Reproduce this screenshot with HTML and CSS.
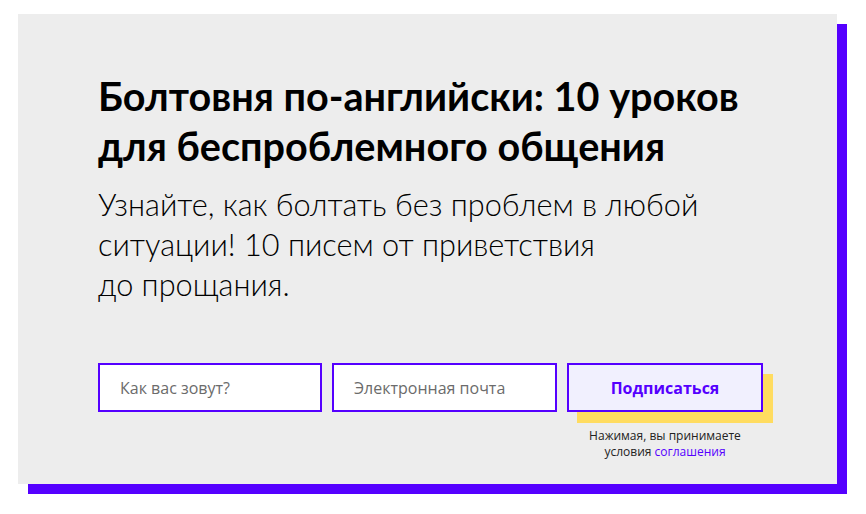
FILE: index.html
```html
<!DOCTYPE html>
<html lang="ru">

<head>
    <meta charset="UTF-8" />
    <meta name="viewport" content="width=device-width, initial-scale=1.0" />
    <title>Болтовня по-английски</title>
    <link rel="stylesheet" href="styles.css">
</head>

<body>

    <div class="promo">
        <h1>Болтовня по-английски: 10 уроков<br>для беспроблемного общения</h1>
        <p class="lead">Узнайте, как болтать без проблем в любой<br>ситуации! 10 писем от приветствия<br>до прощания.</p>

        <!-- Subscribe form -->
        <form class="subscribe" onsubmit="return false;">
            <input type="text" class="field" placeholder="Как вас зовут?" />
            <input type="email" class="field field-wide" placeholder="Электронная почта" />
            <div class="submit-col">
                <button type="submit" class="submit-btn">Подписаться</button>
                <div class="terms">
                    <div>Нажимая, вы принимаете</div>
                    <div>условия <a href="#">соглашения</a></div>
                </div>
            </div>
        </form>
    </div>

</body>

</html>
```

FILE: styles.css
```css
html {
    min-height: 100%;
}

body {
    margin: 0;
    min-height: 514px;
    box-sizing: border-box;
    padding: 14px 0 30px 18px;
    background: #fff;
    font-family: 'Lato', sans-serif;
    color: #000;
}

.promo {
    width: 819px;
    height: 470px;
    box-sizing: border-box;
    padding: 57px 0 0 80px;
    background: #ededed;
    box-shadow: 10px 10px 0 #5500ff;
}

h1 {
    margin: 0;
    font-size: 39.6px;
    line-height: 50px;
    font-weight: 700;
}

.lead {
    margin: 14px 0 0;
    font-size: 30.7px;
    line-height: 40px;
    font-weight: 300;
}

.subscribe {
    display: flex;
    gap: 10px;
    margin-top: 58px;
}

.field {
    width: 224px;
    height: 49px;
    box-sizing: border-box;
    padding: 0 20px;
    border: 2px solid #5500ff;
    background: #fff;
    font-family: 'Open Sans', sans-serif;
    font-size: 16px;
    color: #333;
    outline: none;
}

.field-wide {
    width: 225px;
}

.field::placeholder {
    color: #6b6b6b;
}

.submit-col {
    display: flex;
    flex-direction: column;
    align-items: center;
    width: 196px;
}

.submit-btn {
    width: 196px;
    height: 49px;
    border: 2px solid #5500ff;
    background: #f1f0fe;
    box-shadow: 10px 11px 0 #ffdc60;
    font-family: 'Open Sans', sans-serif;
    font-size: 16px;
    font-weight: 700;
    color: #5500ff;
    cursor: pointer;
}

.terms {
    margin-top: 16px;
    font-family: 'Open Sans', sans-serif;
    font-size: 12px;
    line-height: 16px;
    text-align: center;
    color: #222;
}

.terms a {
    color: #5500ff;
    text-decoration: none;
}
```
